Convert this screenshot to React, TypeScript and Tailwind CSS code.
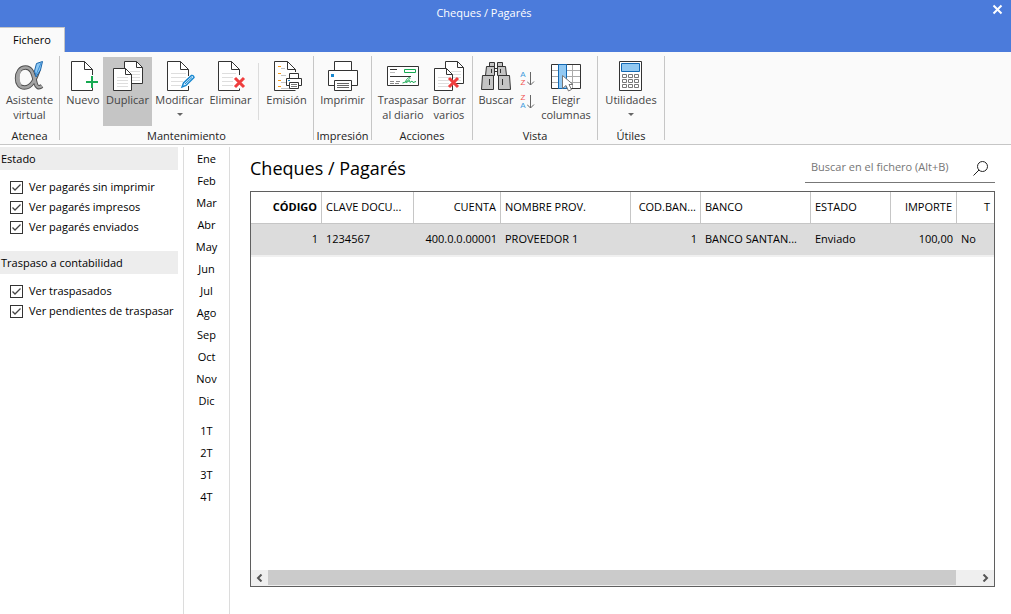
import { useState, type ReactNode } from 'react'
import clsx from 'clsx'

const months = ['Ene', 'Feb', 'Mar', 'Abr', 'May', 'Jun', 'Jul', 'Ago', 'Sep', 'Oct', 'Nov', 'Dic']
const quarters = ['1T', '2T', '3T', '4T']

const filters = [
  {
    title: 'Estado',
    options: ['Ver pagarés sin imprimir', 'Ver pagarés impresos', 'Ver pagarés enviados'],
  },
  {
    title: 'Traspaso a contabilidad',
    options: ['Ver traspasados', 'Ver pendientes de traspasar'],
  },
]

const columns = [
  { label: 'CÓDIGO', width: 'w-[71px]', align: 'text-right', bold: true },
  { label: 'CLAVE DOCU...', width: 'w-[92px]', align: 'text-left' },
  { label: 'CUENTA', width: 'w-[87px]', align: 'text-right' },
  { label: 'NOMBRE PROV.', width: 'w-[130px]', align: 'text-left' },
  { label: 'COD.BAN...', width: 'w-[70px]', align: 'text-right' },
  { label: 'BANCO', width: 'w-[110px]', align: 'text-left' },
  { label: 'ESTADO', width: 'w-[80px]', align: 'text-left' },
  { label: 'IMPORTE', width: 'w-[66px]', align: 'text-right' },
  { label: 'T', width: '', align: 'text-right', cellAlign: 'text-left' },
]

const rows = [
  ['1', '1234567', '400.0.0.00001', 'PROVEEDOR 1', '1', 'BANCO SANTAN...', 'Enviado', '100,00', 'No'],
]

function Icon({ children }: { children: ReactNode }) {
  return (
    <svg viewBox="0 0 32 32" className="size-8 shrink-0" fill="none" aria-hidden="true">
      {children}
    </svg>
  )
}

function RedCross({ x, y }: { x: number; y: number }) {
  return (
    <path
      d={`M${x} ${y}l9 9M${x + 9} ${y}l-9 9`}
      stroke="#ef3e3e"
      strokeWidth="3"
    />
  )
}

function AssistantIcon() {
  const bowl = 'M25 8C22 15 19 26.500 10.500 26.500C5.500 26.500 3 22.500 3 17.500C3 11.500 6 6.500 11.500 6.500C18.500 6.500 19.500 15 21.500 22C22.500 26 24.500 27.500 28 25'
  return (
    <Icon>
      <path d={bowl} stroke="#4d4d4d" strokeWidth="4.400" />
      <path d={bowl} stroke="#a3a3a3" strokeWidth="2.600" />
      <path d="M6 9.500C3.500 13 3.500 21 6.500 24.500" stroke="#a3a3a3" strokeWidth="3" />
      <path d="M22.500 2.500L28.500 .500L26.500 9L22 16L20.500 10Z" fill="#8cc8f4" stroke="#1c66ac" />
      <path d="M27 2L22 14" stroke="#3b8fd6" />
    </Icon>
  )
}

function NewIcon() {
  return (
    <Icon>
      <path d="M25.500 14V8.500L17.500 .500H4.500V29.500H25.500V27" fill="#fff" stroke="#333" />
      <path d="M17.500 .500V8.500H25.500" stroke="#333" />
      <path d="M25 15V27M19 21H31" stroke="#16a951" strokeWidth="2" />
    </Icon>
  )
}

function TwoFilesIcon({ remove = false }: { remove?: boolean }) {
  return (
    <Icon>
      <path d="M12.500 .500H24.500L30.500 6.500V22.500H12.500Z" fill="#fff" stroke="#333" />
      <path d="M24.500 .500V6.500H30.500" stroke="#333" />
      <path d="M18 10.500H28M20 13.500H28M20 16.500H28M20 19.500H28" stroke="#dedede" />
      <path d="M1.500 7.500H13.500L19.500 13.500V29.500H1.500Z" fill="#fff" stroke="#333" />
      <path d="M13.500 7.500V13.500H19.500" stroke="#333" />
      <path d="M5 16.500H16M5 19.500H16M5 22.500H16M5 25.500H16" stroke="#dedede" />
      {remove && <RedCross x={16} y={17} />}
    </Icon>
  )
}

function EditIcon() {
  return (
    <Icon>
      <path d="M24.500 15V8.500L16.500 .500H3.500V29.500H24.500V25" fill="#fff" stroke="#333" />
      <path d="M16.500 .500V8.500H24.500" stroke="#333" />
      <path d="M7 12.500H22M7 16.500H22M7 20.500H19M7 24.500H17" stroke="#dedede" />
      <path d="M18 26L19.500 22L27.500 14.500Q29.500 14 30 16.500L22 24.500Z" fill="#d9efff" stroke="#1787cf" strokeWidth="1.400" />
      <path d="M21 23L28 16.500" stroke="#1787cf" />
    </Icon>
  )
}

function DeleteIcon() {
  return (
    <Icon>
      <path d="M24.500 14V8.500L16.500 .500H3.500V29.500H24.500V27.500" fill="#fff" stroke="#333" />
      <path d="M16.500 .500V8.500H24.500" stroke="#333" />
      <path d="M7 12.500H21M7 16.500H18M7 20.500H18M7 24.500H18" stroke="#dedede" />
      <RedCross x={20} y={17} />
    </Icon>
  )
}

function IssueIcon() {
  return (
    <Icon>
      <path d="M24.500 11V8.500L16.500 .500H3.500V29.500H24.500" fill="#fff" stroke="#333" />
      <path d="M16.500 .500V8.500H24.500" stroke="#333" />
      <path d="M7 5.500H10M7 12.500H10M7 19.500H10M7 25.500H10" stroke="#f59b1a" />
      <path d="M10 7.500H14M10 14.500H15M10 21.500H15M10 27.500H18" stroke="#c4c4c4" />
      <path d="M18.500 12.500H27.500V17.500H18.500ZM15.500 17.500H30.500V24.500H15.500Z" fill="#fff" stroke="#333" />
      <path d="M18.500 21.500H27.500V27.500H18.500Z" fill="#fff" stroke="#333" />
      <path d="M20 23.500H26M20 25.500H26" stroke="#777" />
      <path d="M17 19.500H19" stroke="#1787cf" />
    </Icon>
  )
}

function PrinterIcon() {
  return (
    <Icon>
      <path d="M1.500 9.500H30.500V24.500H1.500ZM7.500 .500H24.500V9.500H7.500Z" fill="#fff" stroke="#333" />
      <path d="M7.500 19.500H24.500V29.500H7.500Z" fill="#fff" stroke="#333" />
      <path d="M10 22.500H22M10 24.500H22M10 26.500H22" stroke="#666" />
      <path d="M4 13H7V16H4Z" fill="#1787cf" />
    </Icon>
  )
}

function ChequeIcon() {
  return (
    <Icon>
      <path d="M.5 5.500H31.500V24.500H.5Z" fill="#fff" stroke="#333" />
      <path d="M17.500 8.500H28.500V11.500H17.500Z" stroke="#16a951" />
      <path d="M3 8.500H10M3 15.500H24" stroke="#333" />
      <path d="M3 11.500H8" stroke="#bbb" />
      <path d="M3 20.500H7M9 20.500H13M3 22.500H7M8 22.500H12" stroke="#888" />
      <path d="M15.500 22C20 21 24.500 17 22.500 16.500C19.500 17 17.500 22 19.500 21.500L22.500 19.500L23 21.500L25 20L26 21.500L29 20.500" stroke="#16a951" />
    </Icon>
  )
}

function BinocularsIcon() {
  return (
    <Icon>
      <path d="M9.500 1.500H14.500V6.500H9.500ZM17.500 1.500H22.500V6.500H17.500Z" fill="#c4c4c4" stroke="#333" />
      <path d="M14.500 7.500H17.500V10.500H14.500Z" fill="#fff" stroke="#333" />
      <path d="M6.500 5.500H14.500V14.500H5.500ZM17.500 5.500H25.500L26.500 14.500H17.500Z" fill="#c4c4c4" stroke="#333" />
      <path d="M2.500 14.500H13.500V28.500H1.500ZM18.500 14.500H29.500L30.500 28.500H18.500Z" fill="#c4c4c4" stroke="#333" />
      <path d="M11.500 8V12M20.500 8V12M9.500 18V24M22.500 18V24" stroke="#333" />
    </Icon>
  )
}

function SortIcon({ letters }: { letters: string[] }) {
  return (
    <span className="flex h-4 items-center font-['Liberation_Sans',sans-serif] text-[8px] leading-2">
      <span className="flex w-2 flex-col">
        {letters.map((letter) => (
          <span key={letter} className={letter === 'A' ? 'text-[#3f9bdc]' : 'text-[#f05050]'}>
            {letter}
          </span>
        ))}
      </span>
      <svg viewBox="0 0 8 16" className="h-4 w-2" fill="none" aria-hidden="true">
        <path d="M3.500 1V14M0 10.500L3.500 14L7 10.500" stroke="#666" />
      </svg>
    </span>
  )
}

function ColumnsIcon() {
  return (
    <Icon>
      <path d="M1.500 3.500H30.500V27.500H1.500Z" fill="#fff" />
      <path d="M1.500 9.500H30.500M1.500 15.500H30.500M1.500 21.500H30.500M22.500 3.500V27.500" stroke="#aaa" />
      <path d="M1.500 3.500H30.500V27.500H1.500Z" stroke="#333" />
      <path d="M8.500 3.500H16.500V27.500H8.500Z" fill="#92c9f2" stroke="#1268b3" />
      <path d="M12.500 14.500V27.500L16 24.500L18.500 30L21.500 28.500L19 23.500H23Z" fill="#fff" stroke="#777" />
    </Icon>
  )
}

function CalculatorIcon() {
  return (
    <Icon>
      <path d="M4.500 .500H26.500V29.500H4.500Z" fill="#fff" stroke="#333" />
      <path d="M6.500 2.500H24.500V10.500H6.500Z" fill="#92c9f2" stroke="#1268b3" />
      <path
        d="M7.500 13.500h4v3h-4zM13.500 13.500h4v3h-4zM19.500 13.500h4v3h-4zM7.500 18.500h4v3h-4zM13.500 18.500h4v3h-4zM19.500 18.500h4v3h-4zM7.500 23.500h4v3h-4zM13.500 23.500h4v3h-4zM19.500 23.500h4v3h-4z"
        stroke="#777"
      />
    </Icon>
  )
}

interface RibbonButtonProps {
  icon: ReactNode
  label: string
  width: string
  active?: boolean
  menu?: boolean
}

function RibbonButton({ icon, label, width, active, menu }: RibbonButtonProps) {
  return (
    <button
      type="button"
      className={clsx(
        'flex h-[69px] shrink-0 flex-col items-center pt-1 leading-[15px] text-[#444]',
        width,
        active ? 'bg-[#c5c5c5]' : 'hover:bg-[#e5e5e5]',
      )}
    >
      {icon}
      <span className="-mt-px whitespace-pre">{label}</span>
      {menu && (
        <svg viewBox="0 0 6 3" className="mt-1.5 h-[3px] w-1.5" aria-hidden="true">
          <path d="M0 0H6L3 3Z" fill="#666" />
        </svg>
      )}
    </button>
  )
}

function RibbonGroup({ title, width, children }: { title: string; width: string; children: ReactNode }) {
  return (
    <section
      className={clsx('flex h-21 shrink-0 flex-col justify-between border-r border-[#c6c6c6] pt-px', width)}
    >
      <div className="flex justify-center">{children}</div>
      <h2 className="text-center leading-2 whitespace-nowrap text-[#222]">{title}</h2>
    </section>
  )
}

function FilterOption({ label }: { label: string }) {
  const [checked, setChecked] = useState(true)

  return (
    <label className="flex h-5 items-center gap-1.5 pl-2.5">
      <span className="grid size-[13px] shrink-0">
        <input
          type="checkbox"
          checked={checked}
          onChange={(event) => setChecked(event.target.checked)}
          className="peer col-start-1 row-start-1 size-[13px] appearance-none border border-[#333] bg-white"
        />
        <svg
          viewBox="0 0 13 13"
          className="pointer-events-none invisible col-start-1 row-start-1 size-[13px] peer-checked:visible"
          fill="none"
          aria-hidden="true"
        >
          <path d="M2.500 6.500L5 9L10.500 3.500" stroke="#444" strokeWidth="1.300" />
        </svg>
      </span>
      <span className="whitespace-nowrap">{label}</span>
    </label>
  )
}

function PeriodButton({ label }: { label: string }) {
  return (
    <button type="button" className="h-[22px] w-full hover:bg-[#ededed]">
      {label}
    </button>
  )
}

export default function App() {
  return (
    <div className="flex min-h-screen flex-col bg-white font-['Open_Sans','Noto_Sans',sans-serif] text-[11px] text-black">
      <header className="bg-[#4b7bdb]">
        <div className="flex h-[27px] items-center justify-between pr-2">
          <h1 className="flex-1 pr-6 text-center text-white">Cheques / Pagarés</h1>
          <button type="button" aria-label="Cerrar" className="mb-2 text-white">
            <svg viewBox="0 0 11 11" className="size-[11px]" fill="none" aria-hidden="true">
              <path d="M1.500 1.500L9.500 9.500M9.500 1.500L1.500 9.500" stroke="currentColor" strokeWidth="2" />
            </svg>
          </button>
        </div>
        <nav className="flex h-[25px]">
          <button type="button" className="w-[65px] border-t border-r border-[#c6c6c6] bg-[#fafafa] font-medium">
            Fichero
          </button>
        </nav>
      </header>

      <div className="flex overflow-hidden border-b border-[#c6c6c6] bg-[#fafafa] py-1">
        <RibbonGroup title="Atenea" width="w-15">
          <RibbonButton icon={<AssistantIcon />} label={'Asistente\nvirtual'} width="w-14" />
        </RibbonGroup>
        <RibbonGroup title="Mantenimiento" width="w-[254px]">
          <RibbonButton icon={<NewIcon />} label="Nuevo" width="w-10" />
          <RibbonButton icon={<TwoFilesIcon />} label="Duplicar" width="w-[49px]" active />
          <RibbonButton icon={<EditIcon />} label="Modificar" width="w-[55px]" menu />
          <RibbonButton icon={<DeleteIcon />} label="Eliminar" width="w-[47px]" />
          <div className="mx-1 my-1.5 w-px bg-[#dcdcdc]" />
          <RibbonButton icon={<IssueIcon />} label="Emisión" width="w-[47px]" />
        </RibbonGroup>
        <RibbonGroup title="Impresión" width="w-[58px]">
          <RibbonButton icon={<PrinterIcon />} label="Imprimir" width="w-13" />
        </RibbonGroup>
        <RibbonGroup title="Acciones" width="w-[101px]">
          <RibbonButton icon={<ChequeIcon />} label={'Traspasar\nal diario'} width="w-[54px]" />
          <RibbonButton icon={<TwoFilesIcon remove />} label={'Borrar\nvarios'} width="w-[38px]" />
        </RibbonGroup>
        <RibbonGroup title="Vista" width="w-[125px]">
          <RibbonButton icon={<BinocularsIcon />} label="Buscar" width="w-10" />
          <div className="flex flex-col gap-[7px] px-[3px] pt-3.5">
            <button type="button" aria-label="Orden ascendente">
              <SortIcon letters={['A', 'Z']} />
            </button>
            <button type="button" aria-label="Orden descendente">
              <SortIcon letters={['Z', 'A']} />
            </button>
          </div>
          <RibbonButton icon={<ColumnsIcon />} label={'Elegir\ncolumnas'} width="w-14" />
        </RibbonGroup>
        <RibbonGroup title="Útiles" width="w-[67px]">
          <RibbonButton icon={<CalculatorIcon />} label="Utilidades" width="w-15" menu />
        </RibbonGroup>
      </div>

      <div className="flex flex-1 pt-0.5">
        <aside className="flex w-[184px] shrink-0 flex-col gap-3.5 border-r border-[#dcdcdc] pr-[5px]">
          {filters.map((filter) => (
            <fieldset key={filter.title}>
              <legend className="h-[23px] w-full bg-[#ededed] pl-px leading-[23px]">{filter.title}</legend>
              <div className="pt-[7px]">
                {filter.options.map((option) => (
                  <FilterOption key={option} label={option} />
                ))}
              </div>
            </fieldset>
          ))}
        </aside>

        <nav className="flex w-[46px] shrink-0 flex-col gap-2 border-r border-[#dcdcdc] pt-px">
          <div>
            {months.map((month) => (
              <PeriodButton key={month} label={month} />
            ))}
          </div>
          <div>
            {quarters.map((quarter) => (
              <PeriodButton key={quarter} label={quarter} />
            ))}
          </div>
        </nav>

        <main className="flex min-w-0 flex-1 flex-col gap-2 pt-1.5 pr-4 pb-[27px] pl-5">
          <div className="flex items-end justify-between">
            <h2 className="text-lg leading-[30px]">Cheques / Pagarés</h2>
            <div className="flex h-[30px] w-[190px] items-center border-b border-[#777] pr-1.5 pl-1.5">
              <input
                type="search"
                aria-label="Buscar en el fichero"
                placeholder="Buscar en el fichero (Alt+B)"
                className="min-w-0 flex-1 outline-none placeholder:text-[#767676]"
              />
              <button type="button" aria-label="Buscar">
                <svg viewBox="0 0 16 16" className="size-4" fill="none" aria-hidden="true">
                  <circle cx="9.500" cy="6.500" r="5" stroke="#222" />
                  <path d="M6 10L.5 15.500" stroke="#222" />
                </svg>
              </button>
            </div>
          </div>

          <div className="flex flex-1 flex-col justify-between border border-[#5f5f5f]">
            <table className="w-full table-fixed border-separate border-spacing-0">
              <thead>
                <tr>
                  {columns.map((column) => (
                    <th
                      key={column.label}
                      className={clsx(
                        'h-8 border-r border-b border-[#c6c6c6] px-1 whitespace-nowrap last:border-r-0',
                        column.width,
                        column.align,
                        column.bold ? 'font-bold' : 'font-normal',
                      )}
                    >
                      {column.label}
                    </th>
                  ))}
                </tr>
              </thead>
              <tbody>
                {rows.map((row) => (
                  <tr key={row[0]} className="bg-[#dcdcdc]">
                    {row.map((value, index) => (
                      <td
                        key={columns[index].label}
                        className={clsx(
                          'h-[33px] border-b-2 border-[#f0f0f0] px-1 whitespace-nowrap',
                          columns[index].cellAlign ?? columns[index].align,
                        )}
                      >
                        {value}
                      </td>
                    ))}
                  </tr>
                ))}
              </tbody>
            </table>

            <div className="flex h-4 bg-[#efefef] pb-px">
              <button type="button" aria-label="Desplazar a la izquierda" className="grid w-[17px] place-items-center">
                <svg viewBox="0 0 7 8" className="h-2 w-[7px]" fill="none" aria-hidden="true">
                  <path d="M5.500 .500L2 4L5.500 7.500" stroke="#555" strokeWidth="2" />
                </svg>
              </button>
              <div className="flex-1 bg-[#cbcbcb]" />
              <div className="w-[21px]" />
              <button type="button" aria-label="Desplazar a la derecha" className="grid w-[17px] place-items-center">
                <svg viewBox="0 0 7 8" className="h-2 w-[7px]" fill="none" aria-hidden="true">
                  <path d="M1.500 .500L5 4L1.500 7.500" stroke="#555" strokeWidth="2" />
                </svg>
              </button>
            </div>
          </div>
        </main>
      </div>
    </div>
  )
}
